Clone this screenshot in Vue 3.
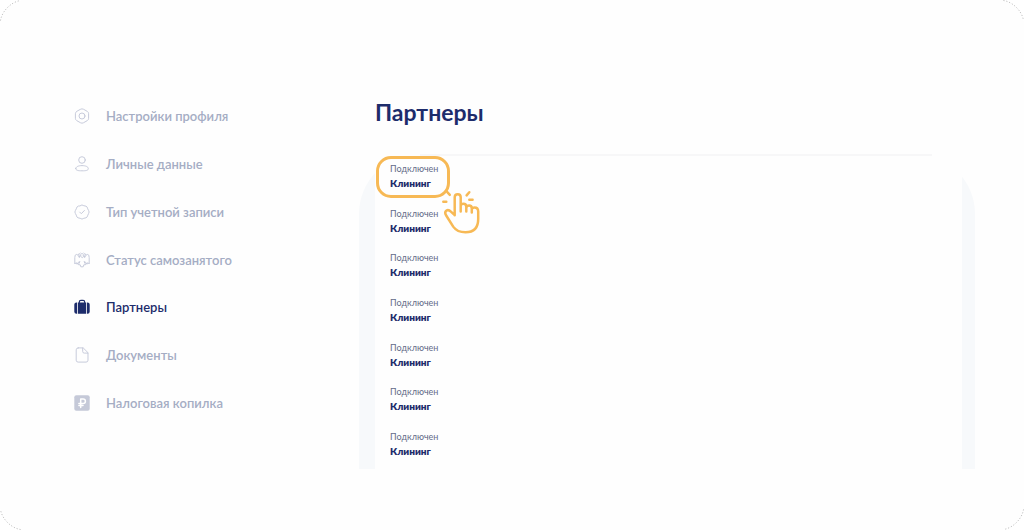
<script setup>
const menu = [
  { icon: 'settings', label: 'Настройки профиля' },
  { icon: 'person', label: 'Личные данные' },
  { icon: 'badge', label: 'Тип учетной записи' },
  { icon: 'eagle', label: 'Статус самозанятого' },
  { icon: 'case', label: 'Партнеры', active: true },
  { icon: 'file', label: 'Документы' },
  { icon: 'ruble', label: 'Налоговая копилка' },
]

const partners = Array.from({ length: 7 }, (_, id) => ({
  id,
  status: 'Подключен',
  name: 'Клининг',
}))

const corners = ['top-left', 'top-right', 'bottom-right', 'bottom-left']
</script>

<template>
  <div class="page">
    <svg
      v-for="corner in corners"
      :key="corner"
      class="corner"
      :class="corner"
      viewBox="0 0 26 26"
      aria-hidden="true"
    >
      <path d="M.5 20.5C2 11 11 2 20.5.5" />
    </svg>

    <nav class="menu">
      <a
        v-for="item in menu"
        :key="item.icon"
        href="#"
        class="menu-link"
        :class="{ active: item.active }"
      >
        <svg class="menu-icon" viewBox="0 0 16 16" aria-hidden="true">
          <template v-if="item.icon === 'settings'">
            <path d="M6.6 1.2Q8 .4 9.4 1.2L13.3 3.4Q14.6 4.2 14.6 5.7V10.3Q14.6 11.8 13.3 12.6L9.4 14.8Q8 15.6 6.6 14.8L2.7 12.6Q1.4 11.8 1.4 10.3V5.7Q1.4 4.2 2.7 3.4Z" />
            <circle cx="8" cy="8" r="3" />
          </template>
          <template v-else-if="item.icon === 'person'">
            <circle cx="8" cy="4" r="3.3" />
            <path d="M1.7 12.6C1.7 10.7 4.5 9.6 8 9.6S14.3 10.7 14.3 12.6 12 14.8 8 14.8 1.7 14.4 1.7 12.6Z" />
          </template>
          <template v-else-if="item.icon === 'badge'">
            <path d="M6.2 1.7Q8 .1 9.8 1.7L12 2.2Q13.5 2.8 13.7 4.8L14.6 6.5Q15.6 8 14.6 9.5L13.8 11.2Q13.5 13.2 12 13.8L9.8 14.3Q8 15.9 6.2 14.3L4 13.8Q2.5 13.2 2.3 11.2L1.4 9.5Q.4 8 1.4 6.5L2.3 4.8Q2.5 2.8 4 2.2Z" />
            <path d="M5.7 8.1 7.3 9.7 10.4 6.5" />
          </template>
          <template v-else-if="item.icon === 'eagle'">
            <path d="M8 5.4 6.6 4.4 6.8 3 5 1.5 4.4 2.8 5.6 3.8 5.4 5.6 4.2 3.4Q2.8 1.4 1.2 3.2L.8 5.6V12L2.2 10.6 3 12.2 4.2 10.4 6 9.6 4.2 12.6 6.2 12.8 6.8 14.8H9.2L9.8 12.8 11.8 12.6 10 9.6 11.8 10.4 13 12.2 13.8 10.6 15.2 12V5.6L14.8 3.2Q13.2 1.4 11.8 3.4L10.6 5.6 10.4 3.8 11.6 2.8 11 1.5 9.2 3 9.4 4.4Z" />
            <path d="M6.8 1.2 8 2.2 9.2 1.2" />
          </template>
          <template v-else-if="item.icon === 'case'">
            <path class="solid" d="M3.9 3.5H12.1V14.8H3.9ZM3.1 3.5V14.8H2.5Q.3 14.8.3 12.8V5.5Q.3 3.5 2.5 3.5ZM12.9 3.5H13.5Q15.7 3.5 15.7 5.5V12.8Q15.7 14.8 13.5 14.8H12.9Z" />
            <path class="handle" d="M5.3 3.8V3Q5.3 1.4 6.9 1.4H9.1Q10.7 1.4 10.7 3V3.8" />
          </template>
          <template v-else-if="item.icon === 'file'">
            <path d="M4.2.9H9.2L14 5.7V13.2Q14 15.1 12 15.1H4.2Q2.2 15.1 2.2 13.2V2.8Q2.2.9 4.2.9Z" />
            <path d="M8.7 1V4.5Q8.7 6.1 10.3 6.1H13.9" />
          </template>
          <template v-else>
            <rect class="solid" x=".3" y=".3" width="15.4" height="15.4" rx="2" />
            <path class="sign" d="M6.7 12.5V4H9.1Q11.4 4 11.4 6.2T9.1 8.5H4.9M4.9 10.6H9" />
          </template>
        </svg>
        <span>{{ item.label }}</span>
      </a>
    </nav>

    <main class="content">
      <h1>Партнеры</h1>
      <section class="panel">
        <ul class="partners">
          <li v-for="(partner, index) in partners" :key="partner.id" class="partner">
            <span class="status">{{ partner.status }}</span>
            <strong class="name">{{ partner.name }}</strong>
            <template v-if="index === 0">
              <span class="highlight"></span>
              <svg class="pointer" viewBox="0 0 40 46" aria-hidden="true">
                <path d="M12.7 27.2V9.2Q12.7 6.2 15.7 6.2T18.7 9.2V23.6M18.7 17.5Q19 15.7 21.4 15.7 24.3 15.7 24.3 18.7V23.6M24.3 19.6Q24.8 17.5 27.1 17.5 29.8 17.5 29.8 20.4V24.6M29.8 21.2Q30.4 19.6 32.5 19.6 36.2 19.6 36.2 23.5V31Q36.2 44.3 23.5 44.3 15.2 44.3 11.2 38.6L4.2 27.5Q2.2 24.2 4.2 22.7 6.5 21.2 8.9 23.7L12.7 27.2M5.3 4.2 7.8 6.8M1.3 13.7H4.3M24.6 7.4 27.3 4.3M27.3 11.8H30.6" />
              </svg>
            </template>
          </li>
        </ul>
      </section>
    </main>
  </div>
</template>

<style>
body {
  background: #fff;
}
</style>

<style scoped>
.page {
  position: relative;
  box-sizing: border-box;
  display: flex;
  align-items: flex-start;
  min-height: 100vh;
  padding: 92px 49px 61px 74px;
  border-radius: 26px;
  background: #fefefe;
  font-family: Lato, "Noto Sans", sans-serif;
}

.corner {
  position: absolute;
  width: 26px;
  height: 26px;
  fill: none;
  stroke: #b5b5b5;
  stroke-width: 1;
  stroke-dasharray: 1 2;
}

.top-left {
  top: 0;
  left: 0;
}

.top-right {
  top: 0;
  right: 0;
  transform: rotate(90deg);
}

.bottom-right {
  right: 0;
  bottom: 0;
  transform: rotate(180deg);
}

.bottom-left {
  bottom: 0;
  left: 0;
  transform: rotate(270deg);
}

.menu {
  display: flex;
  flex: 0 0 285px;
  flex-direction: column;
  justify-content: space-between;
  height: 335px;
}

.menu-link {
  display: flex;
  align-items: center;
  gap: 16px;
  height: 48px;
  color: #a5adc4;
  font-size: 13px;
  font-weight: 600;
  line-height: 20px;
  text-decoration: none;
}

.menu-link.active {
  color: #1d2c6b;
}

.menu-icon {
  width: 16px;
  height: 16px;
  fill: none;
  stroke: #c7cbdb;
  stroke-width: 1;
  stroke-linecap: round;
  stroke-linejoin: round;
}

.solid {
  fill: #c5c9d8;
  stroke: none;
}

.sign {
  stroke: #fff;
  stroke-width: 1.5;
}

.active .solid {
  fill: #1d2c6b;
}

.handle {
  stroke: #1d2c6b;
  stroke-width: 1.2;
}

.content {
  flex: 1;
  min-width: 0;
}

h1 {
  margin: 4px 0 26px 16px;
  color: #1d2c6b;
  font-size: 23px;
  font-weight: 700;
  line-height: 32px;
}

.panel {
  padding: 0 13px 0 16px;
  border-radius: 60px 60px 0 0;
  background: #f7f9fb;
}

.partners {
  display: flex;
  flex-direction: column;
  justify-content: space-between;
  box-sizing: border-box;
  height: 315px;
  margin: 0;
  padding: 8px 15px 11px;
  background:
    linear-gradient(#f7f7f8, #f7f7f8) 45px 0 / calc(100% - 75px) 2px no-repeat,
    #fefefe;
  list-style: none;
}

.partner {
  position: relative;
  display: flex;
  flex-direction: column;
}

.status {
  color: #646c89;
  font-size: 9px;
  line-height: 14px;
}

.name {
  color: #1d2c6b;
  font-size: 10px;
  font-weight: 800;
  line-height: 14px;
}

.highlight {
  position: absolute;
  top: -6px;
  left: -14px;
  box-sizing: border-box;
  width: 74px;
  height: 42px;
  border: 3px solid #f7b955;
  border-radius: 15px;
}

.pointer {
  position: absolute;
  z-index: 1;
  top: 26px;
  left: 52px;
  width: 40px;
  height: 46px;
  fill: none;
  stroke: #f7b955;
  stroke-width: 2.5;
  stroke-linecap: round;
  stroke-linejoin: round;
}
</style>
